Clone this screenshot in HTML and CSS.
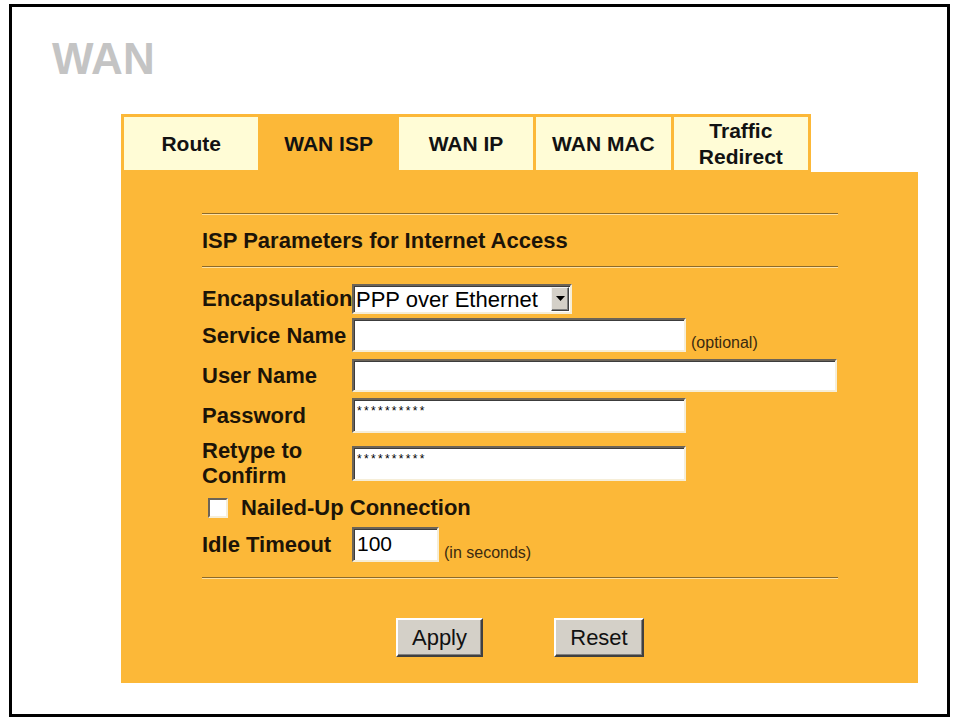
FILE: index.html
```html
<!DOCTYPE html>
<html lang="en">
<head>
    <meta charset="UTF-8">
    <meta name="viewport" content="width=device-width, initial-scale=1.0">
    <title>WAN</title>
    <link rel="stylesheet" href="styles.css">
</head>
<body>
    <div class="frame">
        <h1 class="page-title">WAN</h1>

        <div class="panel">
            <ul class="tabs">
                <li class="tab">Route</li>
                <li class="tab active">WAN ISP</li>
                <li class="tab">WAN IP</li>
                <li class="tab">WAN MAC</li>
                <li class="tab">Traffic<br>Redirect</li>
            </ul>

            <form class="panel-body">
                <hr class="rule">
                <h2 class="section-title">ISP Parameters for Internet Access</h2>
                <hr class="rule">

                <div class="fields">
                    <div class="row row-short">
                        <label class="label" for="encap">Encapsulation</label>
                        <span class="select-box">
                            <select id="encap">
                                <option>PPP over Ethernet</option>
                                <option>Ethernet</option>
                            </select>
                            <span class="select-arrow">
                                <svg width="9" height="5" viewBox="0 0 9 5"><path d="M0 0h9L4.5 5z" fill="#000"/></svg>
                            </span>
                        </span>
                    </div>

                    <div class="row">
                        <label class="label" for="serviceName">Service Name</label>
                        <input id="serviceName" class="text-input mid" type="text">
                        <span class="hint hint-optional">(optional)</span>
                    </div>

                    <div class="row">
                        <label class="label" for="userName">User Name</label>
                        <input id="userName" class="text-input wide" type="text">
                    </div>

                    <div class="row">
                        <label class="label" for="password">Password</label>
                        <input id="password" class="text-input mid masked" type="text" value="**********">
                    </div>

                    <div class="row row-tall">
                        <label class="label" for="retype">Retype to<br>Confirm</label>
                        <input id="retype" class="text-input mid masked" type="text" value="**********">
                    </div>

                    <div class="row row-short">
                        <input id="nailedUp" class="check" type="checkbox">
                        <label class="check-label" for="nailedUp">Nailed-Up Connection</label>
                    </div>

                    <div class="row">
                        <label class="label" for="idle">Idle Timeout</label>
                        <input id="idle" class="text-input short" type="text" value="100">
                        <span class="hint hint-seconds">(in seconds)</span>
                    </div>
                </div>

                <hr class="rule rule-bottom">

                <div class="buttons">
                    <button type="button" class="btn">Apply</button>
                    <button type="reset" class="btn btn-reset">Reset</button>
                </div>
            </form>
        </div>
    </div>
</body>
</html>
```

FILE: styles.css
```css
body {
    margin: 0;
    background-color: #ffffff;
    font-family: "Liberation Sans", Arial, sans-serif;
    color: #1c1408;
}

.frame {
    box-sizing: border-box;
    width: 941px;
    height: 713px;
    margin: 4px 0 0 9px;
    border: 3px solid #000000;
}

.page-title {
    margin: 26px 0 0 40px;
    font-size: 44px;
    line-height: 52px;
    font-weight: bold;
    color: #c4c4c4;
}

.panel {
    margin: 29px 0 0 109px;
    width: 797px;
}

/* tab strip */
.tabs {
    box-sizing: border-box;
    display: flex;
    gap: 3px;
    width: 690px;
    margin: 0;
    padding: 3px 3px 2px 3px;
    list-style: none;
    background-color: #fcb838;
}

.tab {
    flex: 1;
    height: 53px;
    display: flex;
    align-items: center;
    justify-content: center;
    text-align: center;
    background-color: #fffcd6;
    font-size: 21px;
    font-weight: bold;
    line-height: 26px;
    color: #121212;
}

.tab.active {
    background-color: #fcb838;
}

.panel-body {
    margin: 0;
    padding: 41px 80px 26px 81px;
    background-color: #fcb838;
}

.rule {
    height: 0;
    margin: 0;
    border: none;
    border-top: 1px solid #8c6a2a;
    border-bottom: 1px solid #ffe0a0;
}

.rule-bottom {
    margin-top: 13px;
}

.section-title {
    margin: 0;
    font-size: 22px;
    line-height: 51px;
    font-weight: bold;
}

.fields {
    margin-top: 14px;
}

.row {
    display: flex;
    align-items: center;
    height: 40px;
}

.row-short {
    height: 33px;
}

.row-tall {
    height: 56px;
}

.label {
    width: 150px;
    flex-shrink: 0;
    font-size: 22px;
    font-weight: bold;
    line-height: 25px;
    white-space: nowrap;
}

/* sunken win-style fields */
.text-input,
.select-box {
    box-sizing: border-box;
    border: 2px solid;
    border-color: #6c6458 #f6eed8 #f6eed8 #6c6458;
    box-shadow: inset 1px 1px 0 #3c3c3c;
    background-color: #ffffff;
}

.text-input {
    height: 34px;
    padding: 0 3px;
    font-family: "Liberation Sans", Arial, sans-serif;
    font-size: 21px;
    color: #000000;
    outline: none;
}

.text-input.mid {
    width: 334px;
}

.text-input.wide {
    width: 485px;
    height: 33px;
}

.text-input.short {
    width: 87px;
    height: 35px;
}

.text-input.masked {
    height: 35px;
    padding-bottom: 9px;
    font-size: 12px;
    letter-spacing: 2.3px;
}

.select-box {
    display: inline-flex;
    width: 220px;
    height: 30px;
    padding: 1px;
}

.select-box select {
    flex: 1;
    min-width: 0;
    appearance: none;
    border: none;
    padding: 0 1px;
    background-color: #ffffff;
    font-family: "Liberation Sans", Arial, sans-serif;
    font-size: 22px;
    color: #000000;
    outline: none;
}

.select-arrow {
    box-sizing: border-box;
    width: 18px;
    display: flex;
    align-items: center;
    justify-content: center;
    background-color: #d4d0c8;
    border: 1px solid;
    border-color: #f4f4f4 #404040 #404040 #f4f4f4;
    box-shadow: inset -1px -1px 0 #808080;
}

.hint {
    align-self: flex-end;
    margin-left: 5px;
    font-size: 16px;
    color: #3a2a10;
}

.hint-optional {
    padding-bottom: 3px;
}

.hint-seconds {
    padding-bottom: 2px;
}

.check {
    appearance: none;
    box-sizing: border-box;
    width: 20px;
    height: 20px;
    margin: 0 0 0 6px;
    border: 2px solid;
    border-color: #6c6458 #f6eed8 #f6eed8 #6c6458;
    background-color: #ffffff;
}

.check-label {
    margin-left: 13px;
    font-size: 22px;
    font-weight: bold;
}

.buttons {
    display: flex;
    justify-content: center;
    gap: 71px;
    margin-top: 39px;
}

.btn {
    box-sizing: border-box;
    width: 87px;
    height: 39px;
    padding: 0;
    background-color: #d4d0c8;
    border: 2px solid;
    border-color: #ffffff #404040 #404040 #ffffff;
    box-shadow: inset -1px -1px 0 #808080;
    font-family: "Liberation Sans", Arial, sans-serif;
    font-size: 22px;
    color: #111111;
    cursor: pointer;
}

.btn-reset {
    width: 90px;
}
```
